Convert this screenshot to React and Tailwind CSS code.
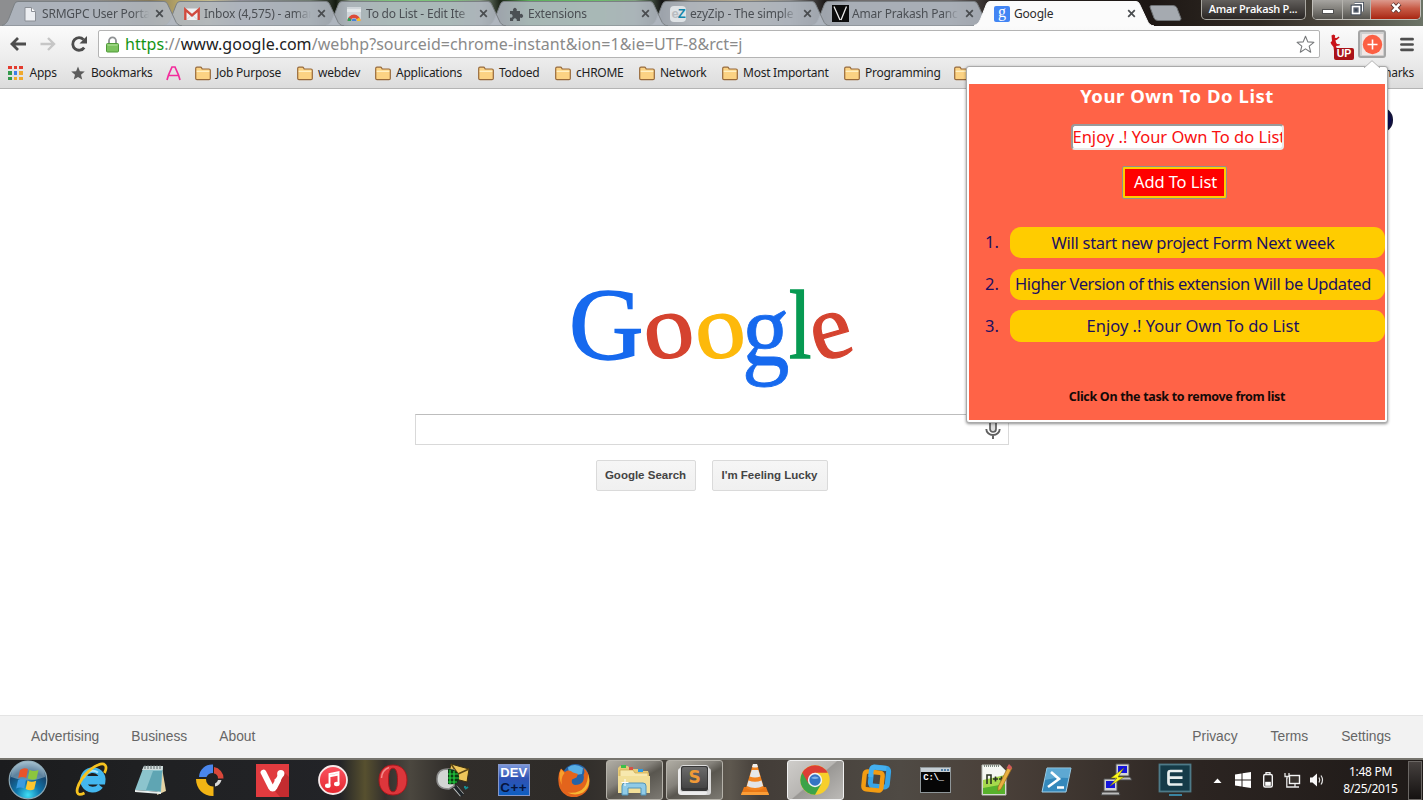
import React from "react";

const ui = "font-['Noto_Sans','Open_Sans',sans-serif]";

/* ---------- Tab strip ---------- */

function PageIcon() {
  return (
    <svg width="16" height="16" viewBox="0 0 16 16">
      <path d="M3 1.500h6.500L13.500 5.500V15H3z" fill="#eceef2" stroke="#8b8f96" />
      <path d="M9.500 1.500V5.500H13.500" fill="#fff" stroke="#8b8f96" />
    </svg>
  );
}

function GmailIcon() {
  return (
    <svg width="16" height="16" viewBox="0 0 16 16">
      <rect x="0.500" y="2.500" width="15" height="11.500" fill="#eef0f2" />
      <path d="M3 13.500L8 8.500l5 5" fill="none" stroke="#cfd3d8" />
      <path d="M1.300 14V3.600L8 9.300l6.700-5.700V14" fill="none" stroke="#d04a3e" strokeWidth="2.400" />
    </svg>
  );
}

function WebStoreIcon() {
  return (
    <svg width="16" height="16" viewBox="0 0 16 16">
      <path d="M1 1h14v14H1z" fill="#d0d6da" />
      <path d="M1 3h14v3H1z" fill="#e4e8ea" />
      <path d="M1.500 15a6.500 6.500 0 0 1 13 0h-3.500a3 3 0 0 0-6 0z" fill="#dd4b39" />
      <path d="M1.500 15a6.500 6.500 0 0 1 1-3.500l3 1.800a3 3 0 0 0-.5 1.700z" fill="#2f9e57" />
      <path d="M14.500 15a6.500 6.500 0 0 0-1-3.500l-3 1.800a3 3 0 0 1 .5 1.700z" fill="#f5c02c" />
      <path d="M5.500 15a2.500 2.500 0 0 1 5 0z" fill="#4a83d6" />
    </svg>
  );
}

function PuzzleIcon() {
  return (
    <svg width="16" height="16" viewBox="0 0 16 16" fill="#4b5054">
      <path d="M2 5h3.200a2 2 0 1 1 3.400 0H12v3.300a2 2 0 1 1 0 3.300V15H8.700a1.900 1.900 0 1 0-3.500 0H2v-3.500a1.800 1.800 0 1 0 0-3.200z" />
    </svg>
  );
}

function EzyIcon() {
  return (
    <span className="flex h-4 w-4 items-center justify-center rounded-sm bg-[#dfe3e6] font-['Liberation_Sans',sans-serif] text-[13px] leading-4 font-bold tracking-[-1px]">
      <span className="text-[#b9bdc1]">e</span>
      <span className="text-[#1585a8]">Z</span>
    </span>
  );
}

function VIcon() {
  return (
    <svg width="17" height="17" viewBox="0 0 17 17">
      <rect width="17" height="17" fill="#0b0b0b" />
      <path d="M2 1.500L8 15 M9 15L14.500 1.500" stroke="#e9e9e9" strokeWidth="1.300" fill="none" />
    </svg>
  );
}

function GoogleFavicon() {
  return (
    <span className="flex h-4 w-4 items-center justify-center rounded-[2px] bg-[#4285f4] pb-[4px] font-['Liberation_Serif',serif] text-[16px] leading-none text-white">
      g
    </span>
  );
}

const tabs = [
  { title: "SRMGPC User Porta", icon: <PageIcon /> },
  { title: "Inbox (4,575) - amar", icon: <GmailIcon /> },
  { title: "To do List - Edit Ite", icon: <WebStoreIcon /> },
  { title: "Extensions", icon: <PuzzleIcon /> },
  { title: "ezyZip - The simple", icon: <EzyIcon /> },
  { title: "Amar Prakash Panc", icon: <VIcon /> },
  { title: "Google", icon: <GoogleFavicon />, active: true },
];

function Tab({ tab, index }) {
  return (
    <div className="relative h-[26px] w-[162px] shrink-0" style={{ zIndex: tab.active ? 20 : 10 - index }}>
      <svg className="absolute top-0 left-[-10px]" width="186" height="26" viewBox="0 0 186 26">
        <path
          d="M-2 26C3 25 5 23 7 18L12.500 4Q13.500 1.500 16 1.500H162Q164.500 1.500 165.500 4L173 20Q175 25.500 180 26Z"
          fill={tab.active ? "#fbfbfb" : "#b1b7c0"}
          fillOpacity={tab.active ? 1 : 0.88}
          stroke={tab.active ? "#fbfbfb" : "#7b8084"}
          strokeWidth="1"
        />
      </svg>
      <div className="relative flex h-[27px] items-center pl-[10px]">
        <div className="flex w-[20px] shrink-0 items-center">{tab.icon}</div>
        <div
          className={`w-[107px] overflow-hidden text-[12px] tracking-[-0.2px] whitespace-nowrap ${
            tab.active ? "text-[#2c2c2c]" : "text-[#4b4f54] mask-r-from-85%"
          }`}
        >
          {tab.title}
        </div>
        <svg className="ml-[6px]" width="9" height="9" viewBox="0 0 9 9">
          <path d="M1.200 1.200l6.600 6.600M7.800 1.200L1.200 7.800" stroke="#4a4d50" strokeWidth="1.700" />
        </svg>
      </div>
    </div>
  );
}

function TabStrip() {
  return (
    <div className="flex h-[26px] bg-[linear-gradient(90deg,#8d8e90_0px,#8d8e90_90px,#85795a_150px,#b5a468_178px,#c2bb90_210px,#8f8f98_240px,#6f7a70_310px,#141a10_336px,#8a9a88_350px,#7cc37a_390px,#7cc37a_450px,#8a9a88_480px,#1c2418_500px,#5db15c_530px,#6dbd6c_600px,#7f9f7e_635px,#141414_662px,#9c9585_690px,#b5ab90_745px,#8a8a8a_790px,#1c1817_825px,#6f6c6c_850px,#6f6c6c_950px,#2b2523_990px,#1d1714_1150px,#302a24_1260px,#4d4940_1340px,#6c7467_1423px)] pl-[12px]">
      {tabs.map((t, i) => (
        <Tab key={i} tab={t} index={i} />
      ))}
      <svg className="mt-[5px] ml-[3px] shrink-0" width="33" height="17" viewBox="0 0 33 17">
        <path d="M1 2Q0.500 0.500 3 0.500H24Q27 0.500 28 3L32 13.500Q32 15.500 30 15.500H9Q6 15.500 5 13Z" fill="#a5aab0" stroke="#6f7376" />
      </svg>
      <div className="ml-[19px] flex h-[20px] w-[105px] shrink-0 items-center justify-center rounded-b-[5px] border border-t-0 border-[#aaa8a2] bg-linear-to-b from-[#625f5c] to-[#2a2624] pr-[1px] font-['Open_Sans',sans-serif] text-[11px] font-semibold tracking-[-0.280px] whitespace-nowrap text-white">
        Amar Prakash P...
      </div>
      <div className="ml-[6px] flex h-[20px] w-[109px] shrink-0 overflow-hidden rounded-b-[5px] border border-t-0 border-[#c2c0ba]">
        <div className="flex w-[30px] items-center justify-center border-r border-[#b5b3ae] bg-linear-to-b from-[#a7a5a1] via-[#84827d] via-45% to-[#55534e]">
          <span className="mt-[3px] h-[5px] w-[12px] border border-[#525252] bg-white" />
        </div>
        <div className="flex w-[28px] items-center justify-center border-r border-[#b5b3ae] bg-linear-to-b from-[#a7a5a1] via-[#84827d] via-45% to-[#55534e] pb-[2px]">
          <svg width="14" height="14" viewBox="0 0 14 14">
            <path d="M4.500 1.500h8v8" fill="none" stroke="#3d4654" strokeWidth="3.200" />
            <path d="M4.500 1.500h8v8" fill="none" stroke="#fff" strokeWidth="1.300" />
            <rect x="2.500" y="4.500" width="7" height="7" fill="none" stroke="#3d4654" strokeWidth="3.600" />
            <rect x="2.500" y="4.500" width="7" height="7" fill="#5c6370" stroke="#fff" strokeWidth="1.700" />
            <rect x="4.800" y="6.800" width="2.400" height="2.400" fill="#3d4654" />
          </svg>
        </div>
        <div className="flex flex-1 items-center justify-center bg-linear-to-b from-[#dc9a8d] via-[#c75a45] via-45% to-[#a8240f] pb-[3px]">
          <svg width="12" height="12" viewBox="0 0 14 13">
            <path d="M2.500 1.500l9 9.500M11.500 1.500l-9 9.500" stroke="#59302c" strokeWidth="5" />
            <path d="M2.800 1.800l8.400 8.900M11.200 1.800l-8.400 8.900" stroke="#fff" strokeWidth="3" />
          </svg>
        </div>
      </div>
    </div>
  );
}

/* ---------- Toolbar ---------- */

function Toolbar() {
  return (
    <div className="flex h-[36px] items-center bg-linear-to-b from-[#fbfbfb] to-[#ebebeb] pl-[9px]">
      <svg width="18" height="16" viewBox="0 0 18 16">
        <path d="M17 8H3.500M9 2L3 8l6 6" fill="none" stroke="#4d4d4d" strokeWidth="2.800" />
      </svg>
      <svg className="ml-[13px]" width="17" height="16" viewBox="0 0 17 16">
        <path d="M0.500 8H13.500M8 2l6 6-6 6" fill="none" stroke="#c6c6c6" strokeWidth="2.400" />
      </svg>
      <svg className="ml-[13px]" width="19" height="18" viewBox="0 0 19 18">
        <path d="M14.200 12.600A6.300 6.300 0 1 1 13.600 4.600" fill="none" stroke="#4d4d4d" strokeWidth="2.800" />
        <path d="M17 1v7.500H9.500z" fill="#4d4d4d" />
      </svg>
      <div className="ml-[9px] flex h-[28px] w-[1222px] shrink-0 items-center rounded-[2px] border border-[#b4b4b4] bg-white pr-[4px] pl-[7px]">
        <svg width="13" height="17" viewBox="0 0 13 17">
          <path d="M3 9V4.800a3.500 3.500 0 0 1 7 0V9" fill="none" stroke="#8f9294" strokeWidth="1.800" />
          <rect x="0.500" y="7.500" width="12" height="8.500" rx="1" fill="#7cc35f" stroke="#4f9a38" />
          <path d="M1.500 9h10" stroke="#b5e39f" />
        </svg>
        <div className="ml-[6px] flex-1 text-[16px] tracking-[0.060px] whitespace-nowrap text-[#8a8a8a]">
          <span className="text-[#149414]">https</span>://<span className="text-[#222]">www.google.com</span>
          /webhp?sourceid=chrome-instant&amp;ion=1&amp;ie=UTF-8&amp;rct=j
        </div>
        <svg width="19" height="19" viewBox="0 0 19 19">
          <path d="M9.500 1.200l2.300 5.700 6.100.4-4.700 3.900 1.500 6-5.200-3.300-5.200 3.300 1.500-6L1.100 7.300l6.100-.4z" fill="#fff" stroke="#77797b" strokeWidth="1.100" strokeLinejoin="round" />
        </svg>
      </div>
      <div className="relative ml-[9px] h-[27px] w-[27px] shrink-0">
        <svg className="mt-[3px]" width="27" height="24" viewBox="0 0 27 24">
          <path d="M2.500 1.500L4.500 .500 6.200 1.500 5.800 3.800 7.500 4 9.800 2.500 10.500 3.500 8 5.800 6.500 6.200 7 8.500 8 10 11 10.300 10.500 11.500 7 12 8.500 17H5L4.500 13 2.500 10.500 1.500 8.500 3 7z" fill="#c9131a" />
        </svg>
        <span className="absolute top-[17px] left-[5px] flex h-[12px] w-[20px] items-center justify-center rounded-[2px] bg-[#aa1218] font-['Liberation_Sans',sans-serif] text-[10.500px] leading-none font-bold text-white">
          UP
        </span>
      </div>
      <div className="ml-[2px] flex h-[28px] w-[28px] shrink-0 items-center justify-center rounded-[3px] border-2 border-[#a5a5a5] bg-[#cfcfcf]">
        <svg width="21" height="21" viewBox="0 0 21 21">
          <rect width="21" height="21" fill="#f1e7e5" />
          <circle cx="10.500" cy="10.500" r="9.700" fill="#fc5f43" />
          <path d="M10.500 5.500v10M5.500 10.500h10" stroke="#fff" strokeWidth="1.600" />
        </svg>
      </div>
      <svg className="ml-[14px] shrink-0" width="14" height="15" viewBox="0 0 14 15">
        <path d="M1.400 2.200h11.200M1.400 7.500h11.200M1.400 12.800h11.200" stroke="#4e4e4e" strokeWidth="2.700" strokeLinecap="round" />
      </svg>
    </div>
  );
}

/* ---------- Bookmarks ---------- */

function FolderIcon() {
  return (
    <svg className="shrink-0" width="16" height="15" viewBox="0 0 16 15">
      <path d="M0.700 12.500V2.500Q0.700 1.200 2 1.200H5.500Q6.300 1.200 6.800 2.200L7.200 3H14Q15.300 3 15.300 4.200V12.500Q15.300 13.600 14 13.600H2Q0.700 13.600 0.700 12.500Z" fill="#fbd283" stroke="#97693a" strokeWidth="1.200" />
      <path d="M1.700 5.300H14.300" stroke="#fff0c4" strokeWidth="1.400" />
    </svg>
  );
}

const appColors = ["#e33b2e", "#e33b2e", "#e33b2e", "#34994c", "#3f7fe8", "#f0a92c", "#34994c", "#f0a92c", "#f0a92c"];

const folders = [
  ["Job Purpose", "w-[102px]"],
  ["webdev", "w-[78px]"],
  ["Applications", "w-[103px]"],
  ["Todoed", "w-[77px]"],
  ["cHROME", "w-[84px]"],
  ["Network", "w-[83px]"],
  ["Most Important", "w-[122px]"],
  ["Programming", "w-[110px]"],
  ["", "w-[110px]"],
  ["", "w-[112px]"],
  ["", "w-[125px]"],
];

function Bookmarks() {
  return (
    <div className="flex h-[27px] items-center border-b border-[#b4b4b4] bg-linear-to-b from-[#ebebeb] to-[#dcdcdc] pb-[4px] pl-[8px] text-[12px] tracking-[-0.250px] whitespace-nowrap text-[#1e1e1e]">
      <div className="flex w-[63px] shrink-0 items-center gap-[7px]">
        <div className="grid grid-cols-3 gap-[2px]">
          {appColors.map((c, i) => (
            <span key={i} className="h-[3.500px] w-[3.500px]" style={{ backgroundColor: c }} />
          ))}
        </div>
        Apps
      </div>
      <div className="flex w-[95px] shrink-0 items-center gap-[6px]">
        <svg width="14" height="14" viewBox="0 0 14 14">
          <path d="M7 0.500l1.900 4.700 4.900.3-3.800 3.200 1.200 4.900L7 10.900l-4.200 2.700L4 8.700.2 5.500l4.900-.3z" fill="#5c5c5c" />
        </svg>
        Bookmarks
      </div>
      <div className="flex w-[29px] shrink-0 items-center">
        <svg width="15" height="15" viewBox="0 0 15 15">
          <path d="M1 14L2.500 9 6 1h3l3.500 8L14 14M3 9.500h9" fill="none" stroke="#f22c9c" strokeWidth="1.700" />
        </svg>
      </div>
      {folders.map(([label, width], i) => (
        <div key={i} className={`flex shrink-0 items-center gap-[5px] ${width}`}>
          <FolderIcon />
          {label}
        </div>
      ))}
      <div className="flex w-[113px] shrink-0 items-center justify-between">
        <FolderIcon />
        Other bookmarks
      </div>
    </div>
  );
}

/* ---------- Google page ---------- */

function GoogleLogo() {
  return (
    <svg width="290" height="110" viewBox="567 283 290 110" fontFamily="'Liberation Serif', serif">
      <text transform="translate(569 358.500) scale(1.020 1.010)" fontSize="101" fill="#1669ee" stroke="#1669ee" strokeWidth="1.600">G</text>
      <g textAnchor="middle">
        <text transform="translate(669.200 336.300) rotate(-9) scale(1.060 0.960)" y="21.800" fontSize="95" fill="#d5432f" stroke="#d5432f" strokeWidth="1.500">o</text>
        <text transform="translate(720.500 336.300) rotate(-9) scale(1.060 0.960)" y="21.800" fontSize="95" fill="#fdb90b" stroke="#fdb90b" strokeWidth="1.500">o</text>
        <text transform="translate(831.800 336.300) rotate(-16) scale(0.980 0.980)" y="21.800" fontSize="95" fill="#d5432f" stroke="#d5432f" strokeWidth="1.200">e</text>
      </g>
      <text transform="translate(742 364.500) scale(0.960 1.050)" fontSize="99" fill="#1669ee" stroke="#1669ee" strokeWidth="0.800">g</text>
      <text transform="translate(789 358.400) scale(0.820 1)" fontSize="98" fill="#079a52" stroke="#079a52" strokeWidth="1.600">l</text>
    </svg>
  );
}

function GooglePage() {
  return (
    <div className="flex h-[669px] flex-col bg-white font-['Liberation_Sans',Arial,sans-serif]">
      <div className="flex flex-1 flex-col items-center pt-[194px]">
        <GoogleLogo />
        <div className="mt-[21px] flex h-[31px] w-[594px] items-center justify-end border border-[#d9d9d9] border-t-[#bdbdbd] bg-white pr-[6px]">
          <svg width="18" height="24" viewBox="0 0 18 24">
            <rect x="6" y="2" width="6" height="12" rx="3" fill="#ddd" stroke="#5f5f5f" strokeWidth="1.700" />
            <path d="M2.300 11a6.700 6 0 0 0 13.400 0M9 17v4" fill="none" stroke="#5f5f5f" strokeWidth="1.900" />
          </svg>
        </div>
        <div className="mt-[15px] flex gap-[16px] text-[11.500px] font-bold text-[#444]">
          <button className="h-[31px] w-[100px] rounded-[2px] border border-[#dadada] bg-linear-to-b from-[#f6f6f6] to-[#f0f0f0]">Google Search</button>
          <button className="h-[31px] w-[116px] rounded-[2px] border border-[#dadada] bg-linear-to-b from-[#f6f6f6] to-[#f0f0f0]">I'm Feeling Lucky</button>
        </div>
      </div>
      <div className="flex h-[43px] items-center justify-between border-t border-[#e4e4e4] bg-[#f2f2f2] pt-[1px] pr-[32px] pl-[31px] text-[13.800px] text-[#666]">
        <div className="flex gap-[32px]">
          <span>Advertising</span>
          <span>Business</span>
          <span>About</span>
        </div>
        <div className="flex gap-[33px]">
          <span>Privacy</span>
          <span>Terms</span>
          <span>Settings</span>
        </div>
      </div>
    </div>
  );
}

/* ---------- To-do popup ---------- */

const todos = [
  ["Will start new project Form Next week", "tracking-[-0.280px]"],
  ["Higher Version of this extension Will be Updated", "tracking-[-0.400px]"],
  ["Enjoy .! Your Own To do List", ""],
];

function TodoPopup() {
  return (
    <div className="absolute top-[66px] left-[966px] z-30 h-[357px] w-[422px] rounded-[3px] border border-[#a9a9a9] bg-white px-[2px] pt-[17px] pb-[2px] shadow-[0_1px_3px_rgba(0,0,0,0.45)]">
      <svg className="absolute top-[-7px] left-[396px]" width="18" height="8" viewBox="0 0 18 8">
        <path d="M1 8L9 0.700 17 8" fill="#fff" stroke="#b5b5b5" />
      </svg>
      <div className="flex h-full flex-col items-center bg-[#ff6347] font-['Noto_Sans',sans-serif]">
        <h1 className="h-[25px] text-[18.500px] leading-[23px] font-bold tracking-[0.540px] text-white">Your Own To Do List</h1>
        <div className="mt-[15px] h-[26px] w-[213px] overflow-hidden rounded-[4px] border-2 border-[#e9e9e9] border-t-[#9a9a9a] border-l-[#9a9a9a] bg-white text-[16.500px] leading-[21px] whitespace-nowrap text-[#f81010]">
          Enjoy .! Your Own To do List
        </div>
        <button className="mt-[16px] mr-[5px] h-[33px] w-[105px] rounded-[2px] border border-[#8f8f8f] bg-[#ffcc00] p-[2px]">
          <span className="flex h-full items-center justify-center bg-[#ff0000] pl-[2px] text-[16.500px] tracking-[-0.100px] whitespace-nowrap text-white">
            Add To List
          </span>
        </button>
        <ol className="mt-[28px] flex w-full flex-col gap-[10.500px] text-[16.500px] text-[#1c0f60]">
          {todos.map(([text, tracking], i) => (
            <li key={i} className="flex h-[31.200px] items-center">
              <span className="w-[41px] shrink-0 pl-[16px]">{i + 1}.</span>
              <span className={`flex h-full min-w-0 flex-1 items-center justify-center rounded-[11px] bg-[#ffcc00] pt-[1px] pr-[9px] whitespace-nowrap ${tracking}`}>{text}</span>
            </li>
          ))}
        </ol>
        <p className="mt-[46px] text-[12.500px] leading-[18px] font-bold tracking-[-0.320px] text-[#140a08]">
          Click On the task to remove from list
        </p>
      </div>
    </div>
  );
}

/* ---------- Taskbar ---------- */

const StartIcon = () => (
  <svg width="40" height="40" viewBox="0 0 40 40">
    <defs>
      <radialGradient id="orb" cx="0.500" cy="0.900" r="0.900">
        <stop offset="0" stopColor="#3fe0f5" />
        <stop offset="0.350" stopColor="#0f78ae" />
        <stop offset="0.700" stopColor="#17466f" />
        <stop offset="1" stopColor="#9ab9cc" />
      </radialGradient>
    </defs>
    <circle cx="20" cy="20" r="18.800" fill="url(#orb)" stroke="#8aa7b5" strokeWidth="1.200" />
    <path d="M3 17a17 16 0 0 1 34 0q-17 7-34 0z" fill="#b6cbd8" opacity="0.450" />
    <path d="M12 10q4-3 8-1l-1.800 9q-4-2-8 0z" fill="#e8542a" />
    <path d="M21.500 9.700q4 2.500 9 .3l-2 8.800q-4 2-8.700-.2z" fill="#8cc63e" />
    <path d="M10 20q4-2 8 0l-1.800 8.600q-4-2-8 0z" fill="#3a9be0" />
    <path d="M19.500 20.600q4 2.400 8.700.2l-2 8.500q-4 2-8.500-.3z" fill="#fbc62e" />
  </svg>
);

const IeIcon = () => (
  <svg width="36" height="36" viewBox="0 0 36 36">
    <path d="M26.500 24A9.800 9.800 0 1 1 28.500 19.500H11.500M11.500 17h14" fill="none" stroke="#43b7ee" strokeWidth="5.800" />
    <path d="M24 10.500A9 9 0 0 0 10 16" fill="none" stroke="#a9e4fb" strokeWidth="2" />
    <path d="M30.500 11C34 4 31 0 24 3 16 6 6 17 3.500 26c-1.500 6 1 8 7 5" fill="none" stroke="#f5c21f" strokeWidth="2.800" />
  </svg>
);

const NoteIcon = () => (
  <svg className="-ml-[3px]" width="34" height="34" viewBox="0 0 34 34">
    <path d="M29 5l4 23-9 4z" fill="#e5d3a4" />
    <path d="M11 3h19l-2 26L2 27z" fill="#8cc4cd" />
    <path d="M11 3h19l-.4 4H9z" fill="#d3dddd" />
    <path d="M20 8h9l-1.500 20.500L13 27z" fill="#4b98a8" opacity="0.700" />
    <path d="M12 2v4M15 2v4M18 2v4M21 2v4M24 2v4M27 2v4" stroke="#5a6668" />
    <path d="M2 27l26 2v2L2 29z" fill="#e8efee" />
  </svg>
);

const RingIcon = () => (
  <svg className="-ml-[5px]" width="30" height="34" viewBox="0 0 30 34">
    <path d="M4 14A13 13 0 0 1 18 1.500V10a7 7 0 0 0-6.500 4z" fill="#4a86ec" />
    <path d="M19 4a11.500 11.500 0 0 1 9.500 11.500H23A5 5 0 0 0 19 10.500z" fill="#d9473a" />
    <path d="M1 16h10a7 7 0 0 0 7.500 7.500V33C9 33.500 1 26 1 16z" fill="#f2b414" />
    <path d="M23 17h3.500a8.500 8.500 0 0 1-6.500 6.500v-3a5 5 0 0 0 3-3.500z" fill="#d7d7d7" />
  </svg>
);

const VivaldiIcon = () => (
  <svg width="33" height="33" viewBox="0 0 33 33">
    <rect width="33" height="33" fill="#e13b3f" />
    <path d="M19 27L29 9l4 4v20H24z" fill="#c42c30" />
    <path d="M7.500 8.500L14.800 23q1.900 3.400 3.800 0l3.400-6.500" fill="none" stroke="#fff" strokeWidth="5.800" strokeLinecap="round" strokeLinejoin="round" />
    <circle cx="24.800" cy="9.500" r="3.600" fill="#fff" />
    <path d="M27.500 11.500L23 19.500 18 16Q21.500 13.500 21.700 10z" fill="#fff" />
  </svg>
);

const ItunesIcon = () => (
  <svg width="32" height="32" viewBox="0 0 32 32">
    <defs>
      <linearGradient id="it" x1="0" y1="0" x2="0" y2="1">
        <stop offset="0" stopColor="#fb5361" />
        <stop offset="1" stopColor="#e5262f" />
      </linearGradient>
    </defs>
    <circle cx="16" cy="16" r="14" fill="url(#it)" stroke="#f5e9ea" strokeWidth="1.800" />
    <path d="M12.500 21.500V10l9-1.800v11.500M12.500 12.300l9-1.800" fill="none" stroke="#fff" strokeWidth="1.900" />
    <ellipse cx="10.800" cy="21.700" rx="2.800" ry="2.200" fill="#fff" />
    <ellipse cx="19.800" cy="20" rx="2.800" ry="2.200" fill="#fff" />
  </svg>
);

const OperaIcon = () => (
  <svg width="30" height="32" viewBox="0 0 30 32">
    <path fillRule="evenodd" d="M15 1C6.500 1 1 7 1 16s5.500 15 14 15 14-6 14-15S23.500 1 15 1zm0 3.200c3.300 0 4.500 5 4.500 11.800S18.300 27.800 15 27.800 10.500 22.800 10.500 16 11.700 4.200 15 4.200z" fill="#dd363b" stroke="#aa161c" />
    <path d="M3.500 14Q4 6 11 3.500" fill="none" stroke="#f28b8b" strokeWidth="1.500" />
  </svg>
);

const MailSearchIcon = () => (
  <svg width="34" height="34" viewBox="0 0 34 34">
    <path d="M15 1l18 5-2 13-19-5z" fill="#eec65a" stroke="#3a2e10" />
    <path d="M15 1l7 10 11-5" fill="none" stroke="#5d4716" strokeWidth="1.500" />
    <path d="M12 6q-11 0-11 10t12 10l5-3V7z" fill="#d3d6d4" stroke="#8a8a8a" strokeWidth="1.500" />
    <path d="M12 6c8 0 12 5 11 10s-7 6-11 5z" fill="#0a3c12" />
    <path d="M14 7v14M18 8v13M12 11h10M12 15h11M12 19h9" stroke="#24d440" strokeWidth="1.200" />
    <path d="M19 24l7 8" stroke="#c9cccc" strokeWidth="4.800" />
    <path d="M19 23.500l7.500 9" stroke="#20262a" strokeWidth="3.400" />
    <path d="M29 26l3-2M28 24h2" stroke="#168c91" strokeWidth="2" />
  </svg>
);

const DevIcon = () => (
  <div className="flex h-[32px] w-[32px] flex-col items-center gap-[1px] overflow-hidden border border-[#8597c9] bg-linear-to-b from-[#7c97da] from-0% via-[#2e52b4] via-45% to-[#0a5fc0] pt-[1px] font-['Liberation_Sans',sans-serif] font-bold">
    <span className="text-[13px] leading-[14px] text-white">DEV</span>
    <span className="text-[13.500px] leading-[14px] tracking-[0.500px] text-[#07143c]">C++</span>
  </div>
);

const FirefoxIcon = () => (
  <svg width="34" height="34" viewBox="0 0 34 34">
    <circle cx="18.500" cy="14" r="13" fill="#2563a8" />
    <path d="M11 4.500q7-5 15 .500l-1 6-6 1-7-2z" fill="#58aee4" />
    <path d="M4 5.500L8 9q4-3 8 .500l5 1.500-1.500 3.500L15 16.500q-1 5 3 5.500 5 0 7.500-3 2-3 1-7 2-3-.5-7.500 7 5 6.500 14A15.500 15.500 0 0 1 1.500 19Q.500 11 4 5.500z" fill="#e3641c" />
    <path d="M31 11q4 12-5 18.500-8 4-15.500 0Q22 31 27.500 24 31 19 31 11z" fill="#f7b733" />
    <path d="M4 6l3.500 4q-4 5-2.500 12Q.500 14 4 6z" fill="#f8a02b" />
  </svg>
);

const ExplorerIcon = () => (
  <svg width="36" height="34" viewBox="0 0 36 34">
    <path d="M2 5l2-2h8l2 3h9l1 2h8l1 3v19H2z" fill="#e8cb76" />
    <path d="M4 7h13l2 3h13v18H4z" fill="#f7e8ae" stroke="#caa84f" strokeWidth="0.700" />
    <path d="M5 2h5v3H5z" fill="#3cbf49" />
    <path d="M13 4h4v3h-4z" fill="#d75244" />
    <path d="M22 6h5v3h-5z" fill="#2c9be4" />
    <path d="M2 13h32v17H2z" fill="#f2df98" />
    <path d="M6 32V23q0-3 3-3h18q3 0 3 3v9h-5v-7H12v7z" fill="#8fcbe7" stroke="#5294b7" />
    <path d="M9 16v7M5.500 19.500h7" stroke="#fff" />
  </svg>
);

const SublimeIcon = () => (
  <div className="mb-[4px] flex h-[27px] w-[29px] flex-col rounded-[3px] border border-[#ddd] bg-[#373737] p-px shadow-[-2px_3px_0_#ececec,2px_3px_0_#d8d8d8]">
    <div className="flex h-[21px] items-center justify-center rounded-[2px] bg-linear-to-b from-[#6b6b6b] to-[#454545] font-['DejaVu_Sans',sans-serif] text-[17px] leading-none font-bold text-[#f19a37]">
      S
    </div>
  </div>
);

const VlcIcon = () => (
  <svg width="30" height="34" viewBox="0 0 30 34">
    <path d="M4 24h22l3 8H1z" fill="#e97715" />
    <path d="M2 29h26l1 3H1z" fill="#fa9d37" />
    <path d="M13 1h4l7 24q-9 5-18 0z" fill="#f28420" />
    <path d="M11.700 7h6.600l2 6.500q-5.300 2-10.600 0z" fill="#e6e8e9" />
    <path d="M8.500 17.500q6.500 2.500 13 0l1.600 5.500q-8 4-16.200 0z" fill="#e2e5e8" />
    <path d="M13 1h4l1 3q-3 1-6 0z" fill="#eee" />
  </svg>
);

const ChromeIcon = () => (
  <svg width="32" height="32" viewBox="0 0 32 32">
    <circle cx="16" cy="16" r="14.700" fill="#f6cf2b" />
    <path d="M16 16L3.270 8.650A14.700 14.700 0 0 0 16 30.700L22.360 19.670z" fill="#3ca349" />
    <path d="M16 8.700H28.730A14.700 14.700 0 0 0 3.270 8.650L9.640 19.670 16 16z" fill="#dc3e35" />
    <circle cx="16" cy="16" r="7.200" fill="#f2f4f5" />
    <circle cx="16" cy="16" r="5.700" fill="#3474c4" />
    <path d="M12 14a5 4 0 0 1 8 0q-4 2-8 0z" fill="#7fb2e8" />
  </svg>
);

const VmIcon = () => (
  <svg width="32" height="32" viewBox="0 0 32 32">
    <rect x="11" y="3.500" width="17" height="19" rx="3" fill="none" stroke="#37a4e6" strokeWidth="5" transform="rotate(6 19 13)" />
    <rect x="4" y="8" width="18" height="18" rx="3" fill="none" stroke="#f39c12" strokeWidth="4.500" transform="rotate(6 13 17)" />
    <path d="M10.500 13l.8-6.500q.4-3.500 4-3.200l11 1.200" fill="none" stroke="#45b0ef" strokeWidth="4.800" />
  </svg>
);

const CmdIcon = () => (
  <div className="flex h-[26px] w-[31px] flex-col border border-[#8f9699] bg-[#060606]">
    <div className="flex h-[4px] items-center justify-end gap-px bg-[#c5ced4] pr-px">
      <span className="h-[2px] w-[2px] bg-[#5380a8]" />
      <span className="h-[2px] w-[2px] bg-[#5380a8]" />
      <span className="h-[2px] w-[2px] bg-[#5380a8]" />
    </div>
    <span className="mt-[2px] ml-[2px] font-['Liberation_Mono',monospace] text-[9px] leading-[9px] font-bold tracking-[-0.300px] text-white">C:\_</span>
  </div>
);

const NppIcon = () => (
  <svg width="34" height="34" viewBox="0 0 34 34">
    <path d="M3 2h18l6 6v24H3z" fill="#f5f7f2" stroke="#b9bdb5" />
    <path d="M4 17l22-5v19H4z" fill="#a6d94c" />
    <path d="M4 25l22-4v10H4z" fill="#58b12c" />
    <path d="M5 3h15" stroke="#808a80" strokeDasharray="1 1" strokeWidth="2" />
    <path d="M8 21v-9h4v9M14 16h5M16.500 13.500v5M20 16h5M22.500 13.500v5" stroke="#2b3422" strokeWidth="1.600" fill="none" />
    <path d="M30 2l3 3-11 21-3 2v-4z" fill="#e8b042" stroke="#9b6b1c" strokeWidth="0.700" />
    <path d="M30 1l3 3-1.500 3-4-2z" fill="#d05a5a" />
  </svg>
);

const PowerShellIcon = () => (
  <svg width="34" height="28" viewBox="0 0 34 28">
    <path d="M8 2h24L27 26H3z" fill="#3488bb" stroke="#a2d0e8" />
    <path d="M8 2h24l-2.500 10Q18 11 6 14z" fill="#70b7dc" opacity="0.700" />
    <path d="M12 6l8 7-11 8M18 21.500h7" fill="none" stroke="#fff" strokeWidth="2.600" />
  </svg>
);

const PuttyIcon = () => (
  <svg width="34" height="34" viewBox="0 0 34 34">
    <path d="M16 1h13v12H16z" fill="#d4d4d4" stroke="#555" />
    <path d="M18 3h9v7h-9z" fill="#1414dc" />
    <path d="M15 14h15l2 3H14z" fill="#bdbdbd" stroke="#444" />
    <path d="M4 16h13v12H4z" fill="#d4d4d4" stroke="#555" />
    <path d="M6 18h9v7H6z" fill="#1414dc" />
    <path d="M2 29h17l1 3H1z" fill="#bdbdbd" stroke="#444" />
    <path d="M24 5L11 15h6l-7 8 14-9h-6z" fill="#fdf81d" stroke="#6d6b00" strokeWidth="0.500" />
  </svg>
);

const EIcon = () => (
  <svg className="-ml-[4px]" width="34" height="34" viewBox="0 0 34 34">
    <rect x="1.500" y="1.500" width="31" height="27" fill="#153b48" stroke="#4e7a88" strokeWidth="1.800" />
    <path d="M24.500 8H12.500Q10.500 8 10.500 10v9.500q0 2 2 2h12M11 14.700h13.500" fill="none" stroke="#e8efee" strokeWidth="2.700" />
    <path d="M11 32h13" stroke="#3e9cc2" strokeWidth="1.600" />
  </svg>
);

const taskIcons = [
  { C: StartIcon }, { C: IeIcon }, { C: NoteIcon }, { C: RingIcon }, { C: VivaldiIcon }, { C: ItunesIcon }, { C: OperaIcon },
  { C: MailSearchIcon }, { C: DevIcon }, { C: FirefoxIcon }, { C: ExplorerIcon, open: true }, { C: SublimeIcon, open: true },
  { C: VlcIcon }, { C: ChromeIcon, focus: true }, { C: VmIcon }, { C: CmdIcon }, { C: NppIcon }, { C: PowerShellIcon },
  { C: PuttyIcon }, { C: EIcon },
];

function Taskbar() {
  return (
    <div className="flex h-[42px] items-center border-t-2 border-[#77756f] bg-[linear-gradient(90deg,#1b1c1e_0px,#202123_170px,#222327_340px,#57502f_365px,#33302d_385px,#4b473f_410px,#302d2a_450px,#2e2b28_570px,#4a453e_690px,#5e584f_730px,#433d38_760px,#4f4a44_900px,#4a4039_1000px,#3a322d_1100px,#2b2421_1200px,#1f1a18_1423px)]">
      <div className="flex h-full w-[1206px] shrink-0">
        {taskIcons.map(({ C, open, focus }, i) => (
          <div key={i} className={`flex h-full shrink-0 items-center justify-center ${i === 0 ? "w-[61.500px] pr-[5px]" : "w-[60.300px]"}`}>
            <div
              className={`flex h-[40px] w-[57px] items-center justify-center ${
                open
                  ? "rounded-[3px] border border-[#b5b2aa] bg-[linear-gradient(150deg,#b0ada4_0%,#84817a_40%,#59564f_55%,#7d7a73_100%)]"
                  : focus
                    ? "rounded-[3px] border border-[#f1f1f1] bg-[linear-gradient(140deg,#cfcdca_0%,#b8b6b3_48%,#9a9895_50%,#bcbab7_100%)]"
                    : ""
              }`}
            >
              <C />
            </div>
          </div>
        ))}
      </div>
      <div className="flex w-[120px] shrink-0 items-center pl-[6px]">
        <svg width="11" height="7" viewBox="0 0 11 7">
          <path d="M1.500 6L5.500 1.500 9.500 6z" fill="#fff" />
        </svg>
        <svg className="ml-[12px]" width="16" height="16" viewBox="0 0 16 16">
          <path d="M0 2.500L6.500 1.500V7.500H0zM7.500 1.300L16 0V7.500H7.500zM0 8.500H6.500V14.500L0 13.500zM7.500 8.500H16V16L7.500 14.700z" fill="#fff" />
        </svg>
        <svg className="ml-[11px]" width="12" height="16" viewBox="0 0 12 16">
          <path d="M4 2V0.700h4V2" fill="none" stroke="#eee" strokeWidth="1.300" />
          <rect x="1.700" y="2.500" width="8.600" height="12.500" rx="1.500" fill="#292422" stroke="#f4f4f4" strokeWidth="1.400" />
          <rect x="3.200" y="9.800" width="5.600" height="4" fill="#fff" />
        </svg>
        <svg className="ml-[10px]" width="17" height="17" viewBox="0 0 17 17">
          <rect x="5.500" y="3.500" width="10" height="8" fill="#38322e" stroke="#f4f4f4" strokeWidth="1.400" />
          <path d="M8 15h7M11 12v3M2.800 6v9H8M1 1v3.500h4V1M3 4.500V7" fill="none" stroke="#e6e6e6" strokeWidth="1.300" />
        </svg>
        <svg className="ml-[8px]" width="16" height="16" viewBox="0 0 16 16">
          <path d="M1 5.500h2.500L8 1.500v13l-4.500-4H1z" fill="#f8f8f8" />
          <path d="M10 5.500q1.500 2.500 0 5M12 3.500q3 4.500 0 9" fill="none" stroke="#e2e2e2" strokeWidth="1.200" />
        </svg>
      </div>
      <div className="flex w-[82px] shrink-0 flex-col items-center pl-[7px] text-[12px] leading-[17.500px] tracking-[-0.300px] whitespace-nowrap text-white">
        <span>1:48 PM</span>
        <span>8/25/2015</span>
      </div>
      <div className="h-[39px] w-[14px] shrink-0 border border-[#6b6764] bg-linear-to-b from-[#46413f] to-[#151211]" />
    </div>
  );
}

export default function App() {
  return (
    <div className={`relative flex h-[800px] w-[1423px] flex-col overflow-hidden bg-white ${ui}`}>
      <TabStrip />
      <Toolbar />
      <Bookmarks />
      <div className="relative">
        <GooglePage />
        <span className="absolute top-[18px] left-[1368px] h-[26px] w-[25px] rounded-full border-2 border-[#15153a] bg-[#0b0b52]" />
      </div>
      <TodoPopup />
      <Taskbar />
    </div>
  );
}
